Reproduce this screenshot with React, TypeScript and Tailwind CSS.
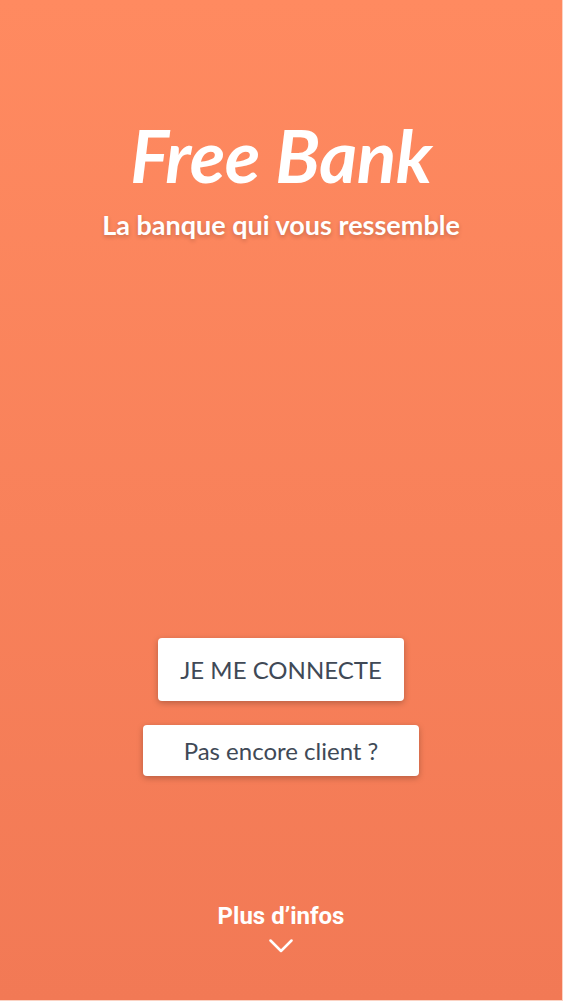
export default function App() {
  return (
    <div className="w-[563px] h-[1001px] border-r border-b border-[#fbd3c4] bg-gradient-to-b from-[#ff8a60] to-[#f27955] flex flex-col items-center font-['Lato',sans-serif] text-white">
      <h1 className="mt-[111px] text-[73px] leading-[88px] font-bold italic tracking-[-0.5px]">Free Bank</h1>
      <p className="mt-[10px] text-[27px] leading-[32px] font-bold [text-shadow:0_2px_4px_rgba(0,0,0,0.2)]">
        La banque qui vous ressemble
      </p>

      <div className="mt-[397px] flex flex-col items-center gap-[24px]">
        <button className="w-[246px] h-[63px] bg-white rounded-[4px] shadow-[0_2px_6px_rgba(0,0,0,0.25)] text-[24px] text-[#404956]">
          JE ME CONNECTE
        </button>
        <button className="w-[276px] h-[51px] bg-white rounded-[4px] shadow-[0_2px_6px_rgba(0,0,0,0.25)] text-[24px] text-[#404956]">
          Pas encore client ?
        </button>
      </div>

      <div className="mt-auto mb-[47px] flex flex-col items-center">
        <span className="font-['Roboto',sans-serif] font-bold text-[24px] leading-[28px]">Plus d’infos</span>
        <svg width="24" height="14" viewBox="0 0 24 14" className="mt-[9px]" fill="none" stroke="white" strokeWidth="2.5" strokeLinecap="round" strokeLinejoin="round">
          <path d="M1.5 1.5L12 12L22.5 1.5" />
        </svg>
      </div>
    </div>
  );
}
